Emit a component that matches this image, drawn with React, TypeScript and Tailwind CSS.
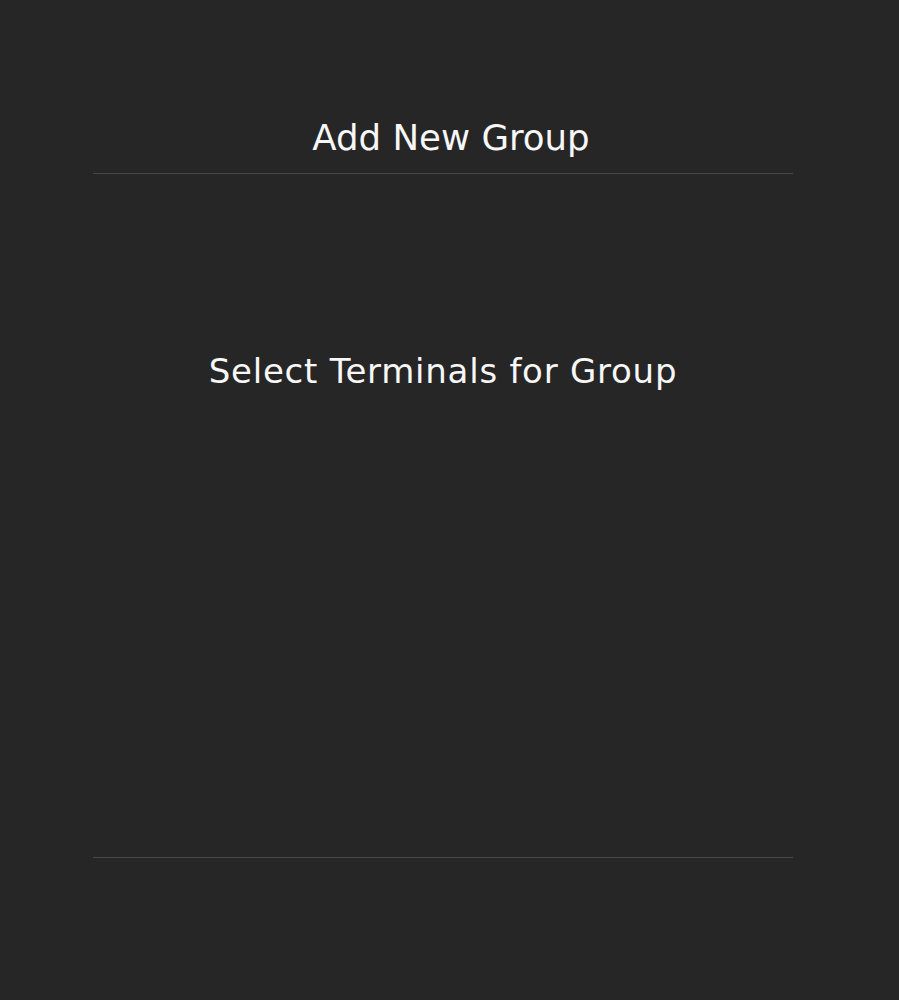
export default function App() {
  return (
    <div className="min-h-screen bg-[#262626] font-['DejaVu_Sans',sans-serif] text-[#f7f7f7]">
      <div className="ml-[93px] w-[700px]">
        <div className="border-b border-[#474747] pt-[116px] pb-[13px] pl-4">
          <h1 className="text-center text-[35.6px] leading-[44px] font-normal">Add New Group</h1>
        </div>
        <div className="h-[684px] border-b border-[#474747] pt-[176px]">
          <p className="text-center text-[34px] leading-[42px] tracking-[0.75px]">Select Terminals for Group</p>
        </div>
      </div>
    </div>
  );
}
